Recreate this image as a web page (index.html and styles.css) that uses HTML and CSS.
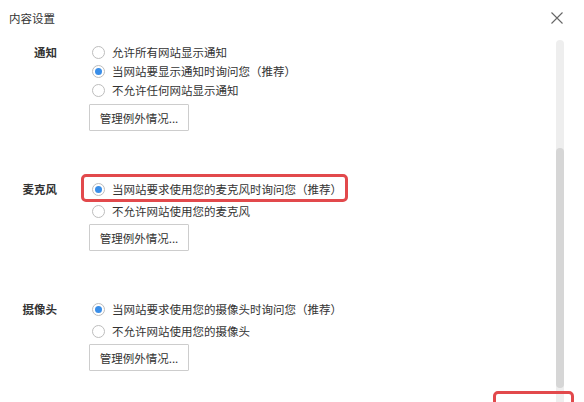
FILE: index.html
```html
<!doctype html>
<html>
<head>
    <meta charset="utf-8">
    <title>内容设置</title>
    <link rel="stylesheet" href="styles.css">
</head>
<body>
<div class="dialog">
    <!--Title bar-->
    <div class="header">
        <span class="title">内容设置</span>
        <span class="close">
            <svg width="12" height="12" viewBox="0 0 12 12"><path d="M0.5 0.5L11.5 11.5M11.5 0.5L0.5 11.5" stroke="#666" stroke-width="1.1" fill="none"/></svg>
        </span>
    </div>

    <div class="body">
        <div class="sections">
            <!--Notifications-->
            <div class="section first">
                <div class="label">通知</div>
                <div class="options">
                    <div class="radio"><span class="dot"></span>允许所有网站显示通知</div>
                    <div class="radio"><span class="dot on"></span>当网站要显示通知时询问您（推荐）</div>
                    <div class="radio"><span class="dot"></span>不允许任何网站显示通知</div>
                    <button class="manage">管理例外情况...</button>
                </div>
            </div>

            <!--Microphone-->
            <div class="section roomy">
                <div class="label">麦克风</div>
                <div class="options">
                    <span class="mark"></span>
                    <div class="radio"><span class="dot on"></span>当网站要求使用您的麦克风时询问您（推荐）</div>
                    <div class="radio"><span class="dot"></span>不允许网站使用您的麦克风</div>
                    <button class="manage">管理例外情况...</button>
                </div>
            </div>

            <!--Camera-->
            <div class="section roomy">
                <div class="label">摄像头</div>
                <div class="options">
                    <div class="radio"><span class="dot on"></span>当网站要求使用您的摄像头时询问您（推荐）</div>
                    <div class="radio"><span class="dot"></span>不允许网站使用您的摄像头</div>
                    <button class="manage">管理例外情况...</button>
                </div>
            </div>
        </div>

        <div class="scrollbar"><div class="thumb"></div></div>
    </div>

    <!--Highlight around the (hidden) done button-->
    <span class="mark done"></span>
</div>
</body>
</html>
```

FILE: styles.css
```css
html, body{margin:0; background:#fff;}
body{font-family:"Noto Sans CJK SC", "Noto Sans", sans-serif; font-size:11.5px; color:#333;}
.dialog{position:relative; width:584px; height:402px; overflow:hidden;}

/*Title bar*/
.header{height:36px; display:flex; align-items:center; justify-content:space-between; padding:0 20px 0 9px;}
.title{font-size:11.5px; color:#333;}
.close{display:flex; margin-right:1px;}

/*Body with sections and scrollbar*/
.body{display:flex; height:366px;}
.sections{flex:1;}
.section{display:flex; margin-top:49px;}
.section.first{margin-top:7px;}
.label{width:57px; text-align:right; font-weight:bold; line-height:19px;}
.options{position:relative; margin-left:32px; display:flex; flex-direction:column; align-items:flex-start;}
.roomy .options{gap:3px;}
.radio{display:flex; align-items:center; height:19px; line-height:19px; white-space:nowrap;}
.dot{position:relative; width:13px; height:13px; box-sizing:border-box; border:1px solid #bdbdbd; border-radius:50%; background:#fff; margin:0 7px 0 3px;}
.dot.on::after{content:""; position:absolute; left:2px; top:2px; width:7px; height:7px; border-radius:50%; background:#3a8ee8;}
.manage{margin-top:4px; width:100px; height:27px; padding:0; border:1px solid #cdcdcd; border-radius:1px; background:#fff; font-family:inherit; font-size:11.5px; color:#333;}
.roomy .manage{margin-top:0;}

.scrollbar{width:8px; margin:4px 20px 0 0; background:#eeeeee; border-radius:4px 4px 0 0;}
.thumb{margin-top:108px; height:240px; background:#d6d6d6; border-radius:4px;}

/*Red annotation boxes*/
.mark{position:absolute; left:-8px; top:-6px; width:267px; height:28px; box-sizing:border-box; border:3px solid #e2494c; border-radius:5px;}
.mark.done{left:493px; top:391px; width:81px; height:30px;}
```
